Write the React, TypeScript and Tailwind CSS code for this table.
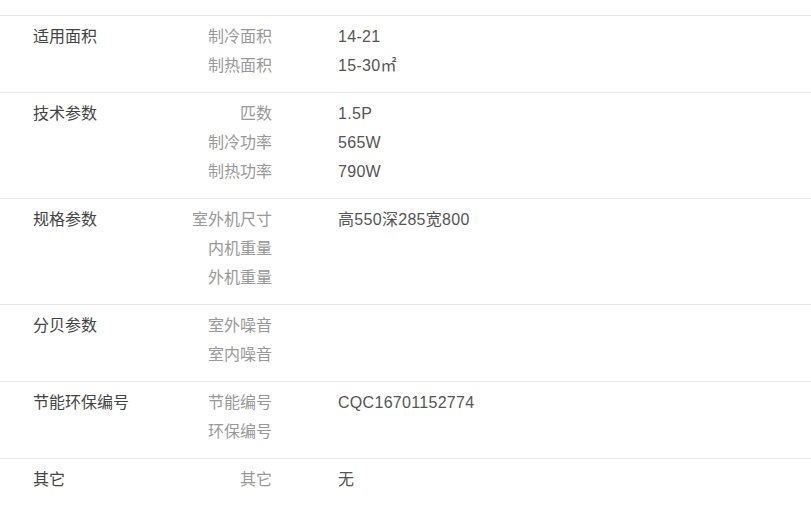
import React from 'react';

type Group = {
  title: string;
  items: { name: string; value: React.ReactNode }[];
};

const groups: Group[] = [
  {
    title: '适用面积',
    items: [
      { name: '制冷面积', value: '14-21' },
      { name: '制热面积', value: '15-30㎡' },
    ],
  },
  {
    title: '技术参数',
    items: [
      { name: '匹数', value: '1.5P' },
      { name: '制冷功率', value: '565W' },
      { name: '制热功率', value: '790W' },
    ],
  },
  {
    title: '规格参数',
    items: [
      { name: '室外机尺寸', value: '高550深285宽800' },
      { name: '内机重量', value: '' },
      { name: '外机重量', value: '' },
    ],
  },
  {
    title: '分贝参数',
    items: [
      { name: '室外噪音', value: '' },
      { name: '室内噪音', value: '' },
    ],
  },
  {
    title: '节能环保编号',
    items: [
      { name: '节能编号', value: 'CQC16701152774' },
      { name: '环保编号', value: '' },
    ],
  },
  {
    title: '其它',
    items: [{ name: '其它', value: '无' }],
  },
];

export default function App() {
  return (
    <div
      className="w-[811px] h-[517px] overflow-hidden bg-white pt-[15px] text-[16px]"
      style={{ fontFamily: '"Liberation Sans", "Noto Sans CJK SC", sans-serif' }}
    >
      {groups.map((g) => (
        <div key={g.title} className="flex border-t border-[#e8e8e8] pt-[6px] pb-[12px] leading-[29px]">
          <div className="w-[173px] shrink-0 pl-[33px] text-[#444]">{g.title}</div>
          <div className="w-[99px] shrink-0">
            {g.items.map((it) => (
              <div key={it.name} className="h-[29px] text-right text-[#999]">
                {it.name}
              </div>
            ))}
          </div>
          <div className="ml-[66px]">
            {g.items.map((it) => (
              <div key={it.name} className="h-[29px] text-[#555] tracking-[0.3px]">
                {it.value}
              </div>
            ))}
          </div>
        </div>
      ))}
    </div>
  );
}
